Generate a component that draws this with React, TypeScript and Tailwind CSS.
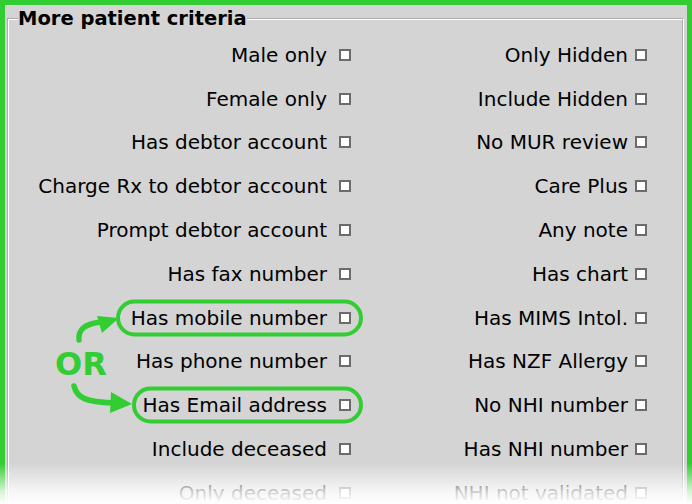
import React from "react";

// ── Data ──────────────────────────────────────────────────────────────────────

const ROWS: Array<{ left: string; right: string; ring?: "mobile" | "email" }> = [
  { left: "Male only", right: "Only Hidden" },
  { left: "Female only", right: "Include Hidden" },
  { left: "Has debtor account", right: "No MUR review" },
  { left: "Charge Rx to debtor account", right: "Care Plus" },
  { left: "Prompt debtor account", right: "Any note" },
  { left: "Has fax number", right: "Has chart" },
  { left: "Has mobile number", right: "Has MIMS Intol.", ring: "mobile" },
  { left: "Has phone number", right: "Has NZF Allergy" },
  { left: "Has Email address", right: "No NHI number", ring: "email" },
  { left: "Include deceased", right: "Has NHI number" },
  { left: "Only deceased", right: "NHI not validated" },
];

// ── Bits ──────────────────────────────────────────────────────────────────────

function Box() {
  return (
    <span className="block w-[12px] h-[12px] shrink-0 border-2 border-[#6b6b6b] bg-white" />
  );
}

function Annotations() {
  return (
    <svg
      className="absolute inset-0 pointer-events-none"
      width={692}
      height={504}
      viewBox="0 0 692 504"
    >
      {/* upper arrow */}
      <path
        d="M79 340 C 78 329, 85 324, 101 322"
        fill="none"
        stroke="#32cd32"
        strokeWidth={5.5}
        strokeLinecap="round"
      />
      <polygon points="97,316 119,318 102,333" fill="#32cd32" />
      {/* lower arrow */}
      <path
        d="M74 386 C 77 398, 86 402, 113 403"
        fill="none"
        stroke="#32cd32"
        strokeWidth={5.5}
        strokeLinecap="round"
      />
      <polygon points="111,392 132,404 110,413" fill="#32cd32" />
    </svg>
  );
}

// ── Main ──────────────────────────────────────────────────────────────────────

export default function App() {
  return (
    <div className="relative w-[692px] h-[504px] overflow-hidden bg-[#32cd32] px-[5px] pt-[5px] font-['DejaVu_Sans',sans-serif] text-black">
      <div className="h-full bg-[#d4d4d4] pt-[2px] pl-[2px] pr-[3px]">
        <fieldset className="border-2 [border-style:groove] border-white pl-[9px] pr-0 pt-[2px] pb-0 m-0">
          <legend className="px-0 text-[19.5px] leading-[24px] font-bold">
            More patient criteria
          </legend>
          <div className="flex flex-col">
            {ROWS.map((r) => (
              <div key={r.left} className="flex h-[43.8px] items-center">
                <div className="flex w-[333px] justify-end">
                  <div className="relative flex items-center">
                    {r.ring && (
                      <span
                        className={
                          r.ring === "mobile"
                            ? "absolute -left-[15px] -right-[12px] top-1/2 -translate-y-1/2 h-[37px] rounded-full border-4 border-[#32cd32]"
                            : "absolute -left-[11px] -right-[12px] top-1/2 -translate-y-1/2 h-[37px] rounded-full border-4 border-[#32cd32]"
                        }
                      />
                    )}
                    <span className="text-[20px] leading-[24px] whitespace-nowrap">
                      {r.left}
                    </span>
                    <span className="ml-[12px]">
                      <Box />
                    </span>
                  </div>
                </div>
                <div className="flex w-[296px] justify-end items-center">
                  <span className="text-[20px] leading-[24px] whitespace-nowrap">
                    {r.right}
                  </span>
                  <span className="ml-[7px]">
                    <Box />
                  </span>
                </div>
              </div>
            ))}
          </div>
        </fieldset>
      </div>

      <Annotations />
      <span className="absolute left-[55px] top-[348px] text-[32px] leading-[32px] font-bold text-[#32cd32]">
        OR
      </span>

      {/* bottom fade */}
      <div className="absolute left-0 right-0 top-[463px] bottom-0 bg-linear-to-b from-white/0 via-white/80 via-70% to-white" />
    </div>
  );
}
